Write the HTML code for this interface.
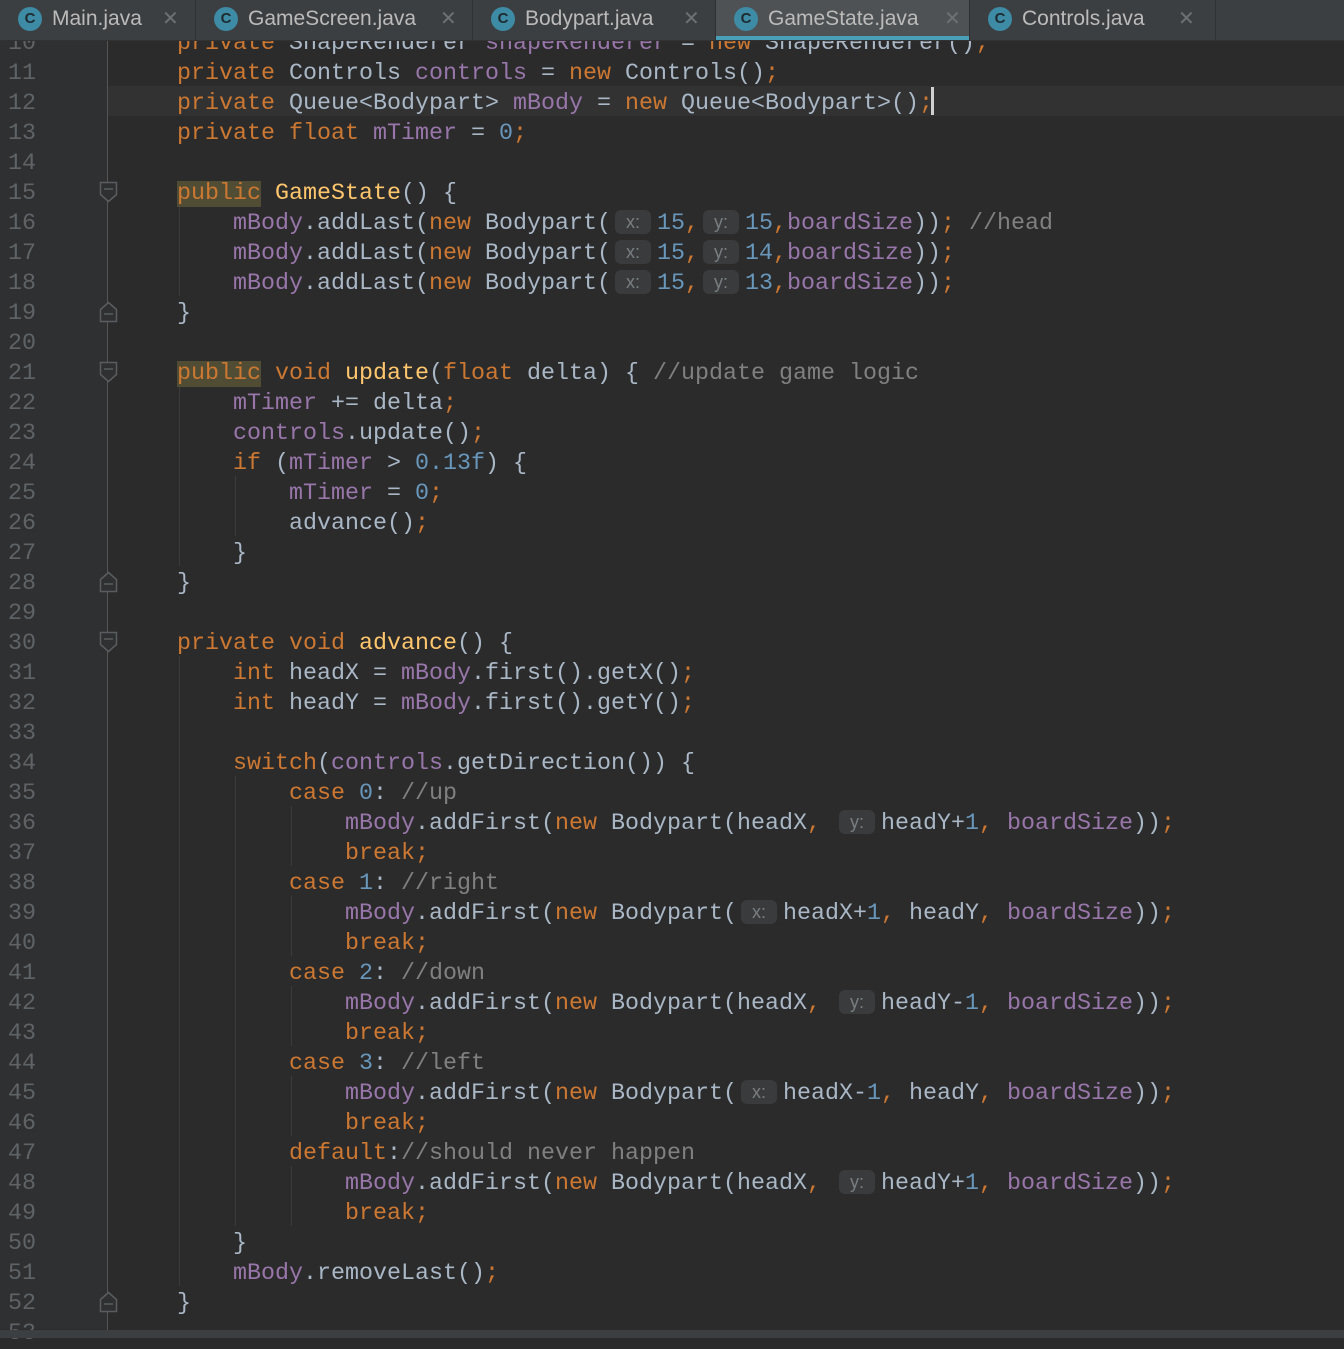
<!DOCTYPE html>
<html><head><meta charset="utf-8"><style>
body{margin:0;width:1344px;height:1338px;background:#2b2b2b;overflow:hidden;position:relative;font-family:"Liberation Mono",monospace}
#tabs{position:absolute;left:0;top:0;width:1344px;height:40px;background:#3c3f41;border-bottom:1px solid #323232;z-index:5;font-family:"Liberation Sans",sans-serif}
.tab{position:absolute;top:0;height:40px;border-right:1px solid #2f3133;color:#bbbbbb;font-size:21px;line-height:38px;white-space:nowrap}
.tab .ic{position:absolute;left:18px;top:7px;width:24px;height:24px;border-radius:50%;background:#3d8ba5;color:#1e2a30;font-size:15px;line-height:24px;text-align:center;font-weight:bold}
.tab .t{position:absolute;left:52px;top:0}
.tab .x{position:absolute;top:0;color:#6e7173;font-size:20px}
.act{background:#4e5254}
.act:after{content:"";position:absolute;left:0;right:0;bottom:0;height:4px;background:#4a9fb8}
#gutter{position:absolute;left:0;top:0;width:108px;height:1329px;background:#2f3031}
#div{position:absolute;left:107px;top:40px;width:1px;height:1290px;background:#555555}
.ln{position:absolute;left:0;width:36px;text-align:right;color:#606366;font-size:23.33px;line-height:30px;height:30px;transform:translateY(3px)}
.cl{position:absolute;left:108px;right:0;height:30px;background:#323232}
.line{position:absolute;left:177px;height:30px;line-height:30px;font-size:23.33px;color:#a9b7c6;white-space:pre;transform:translateY(3px)}
.k{color:#cc7832}.f{color:#9876aa}.n{color:#6897bb}.m{color:#ffc66d}.c{color:#808080}
.hl{background:#504d34}
.h{display:inline-block;width:36px;margin:0 6px 0 4px;height:24px;line-height:24px;vertical-align:1px;background:#393b3c;color:#7a7e80;border-radius:6px;font-size:18px;text-align:center;font-family:"Liberation Sans",sans-serif}
.g{position:absolute;width:1px;background:#3b3b3b}
#bot{position:absolute;left:0;top:1330px;width:1344px;height:8px;background:#3c3f41}
#caret{position:absolute;left:931px;top:87px;width:3px;height:28px;background:#d0d0d0}
</style></head><body>
<div id="gutter"></div>
<div class="cl" style="top:86px"></div>
<div id="div"></div>

<div class="g" style="left:179px;top:206px;height:90px"></div>
<div class="g" style="left:179px;top:386px;height:180px"></div>
<div class="g" style="left:235px;top:476px;height:60px"></div>
<div class="g" style="left:179px;top:656px;height:630px"></div>
<div class="g" style="left:235px;top:776px;height:450px"></div>
<div class="g" style="left:291px;top:806px;height:60px"></div>
<div class="g" style="left:291px;top:896px;height:60px"></div>
<div class="g" style="left:291px;top:986px;height:60px"></div>
<div class="g" style="left:291px;top:1076px;height:60px"></div>
<div class="g" style="left:291px;top:1166px;height:60px"></div>

<svg style="position:absolute;left:0;top:0" width="120" height="1330">
<g fill="#2f3031" stroke="#5a5d5f" stroke-width="1.5">
<path d="M100.5 182.5h16v12l-8 7l-8-7z"/><path d="M104 189h9"/>
<path d="M100.5 321.5h16v-12l-8-7l-8 7z"/><path d="M104 314h9"/>
<path d="M100.5 362.5h16v12l-8 7l-8-7z"/><path d="M104 369h9"/>
<path d="M100.5 591.5h16v-12l-8-7l-8 7z"/><path d="M104 584h9"/>
<path d="M100.5 632.5h16v12l-8 7l-8-7z"/><path d="M104 639h9"/>
<path d="M100.5 1311.5h16v-12l-8-7l-8 7z"/><path d="M104 1304h9"/>
</g></svg>

<div class="ln" style="top:26px">10</div>
<div class="ln" style="top:56px">11</div><div class="ln" style="top:86px">12</div><div class="ln" style="top:116px">13</div><div class="ln" style="top:146px">14</div><div class="ln" style="top:176px">15</div><div class="ln" style="top:206px">16</div><div class="ln" style="top:236px">17</div><div class="ln" style="top:266px">18</div><div class="ln" style="top:296px">19</div><div class="ln" style="top:326px">20</div><div class="ln" style="top:356px">21</div><div class="ln" style="top:386px">22</div><div class="ln" style="top:416px">23</div><div class="ln" style="top:446px">24</div><div class="ln" style="top:476px">25</div><div class="ln" style="top:506px">26</div><div class="ln" style="top:536px">27</div><div class="ln" style="top:566px">28</div><div class="ln" style="top:596px">29</div><div class="ln" style="top:626px">30</div><div class="ln" style="top:656px">31</div><div class="ln" style="top:686px">32</div><div class="ln" style="top:716px">33</div><div class="ln" style="top:746px">34</div><div class="ln" style="top:776px">35</div><div class="ln" style="top:806px">36</div><div class="ln" style="top:836px">37</div><div class="ln" style="top:866px">38</div><div class="ln" style="top:896px">39</div><div class="ln" style="top:926px">40</div><div class="ln" style="top:956px">41</div><div class="ln" style="top:986px">42</div><div class="ln" style="top:1016px">43</div><div class="ln" style="top:1046px">44</div><div class="ln" style="top:1076px">45</div><div class="ln" style="top:1106px">46</div><div class="ln" style="top:1136px">47</div><div class="ln" style="top:1166px">48</div><div class="ln" style="top:1196px">49</div><div class="ln" style="top:1226px">50</div><div class="ln" style="top:1256px">51</div><div class="ln" style="top:1286px">52</div><div class="ln" style="top:1316px">53</div>

<div class="line" style="top:26px"><span class="k">private</span> ShapeRenderer <span class="f">shapeRenderer</span> = <span class="k">new</span> ShapeRenderer()<span class="k">;</span></div>
<div class="line" style="top:56px"><span class="k">private</span> Controls <span class="f">controls</span> = <span class="k">new</span> Controls()<span class="k">;</span></div>
<div class="line" style="top:86px"><span class="k">private</span> Queue&lt;Bodypart&gt; <span class="f">mBody</span> = <span class="k">new</span> Queue&lt;Bodypart&gt;()<span class="k">;</span></div>
<div class="line" style="top:116px"><span class="k">private float</span> <span class="f">mTimer</span> = <span class="n">0</span><span class="k">;</span></div>
<div class="line" style="top:176px"><span class="k hl">public</span> <span class="m">GameState</span>() {</div>
<div class="line" style="top:206px">    <span class="f">mBody</span>.addLast(<span class="k">new</span> Bodypart(<span class="h">x:</span><span class="n">15</span><span class="k">,</span><span class="h">y:</span><span class="n">15</span><span class="k">,</span><span class="f">boardSize</span>))<span class="k">;</span> <span class="c">//head</span></div>
<div class="line" style="top:236px">    <span class="f">mBody</span>.addLast(<span class="k">new</span> Bodypart(<span class="h">x:</span><span class="n">15</span><span class="k">,</span><span class="h">y:</span><span class="n">14</span><span class="k">,</span><span class="f">boardSize</span>))<span class="k">;</span></div>
<div class="line" style="top:266px">    <span class="f">mBody</span>.addLast(<span class="k">new</span> Bodypart(<span class="h">x:</span><span class="n">15</span><span class="k">,</span><span class="h">y:</span><span class="n">13</span><span class="k">,</span><span class="f">boardSize</span>))<span class="k">;</span></div>
<div class="line" style="top:296px">}</div>
<div class="line" style="top:356px"><span class="k hl">public</span> <span class="k">void</span> <span class="m">update</span>(<span class="k">float</span> delta) { <span class="c">//update game logic</span></div>
<div class="line" style="top:386px">    <span class="f">mTimer</span> += delta<span class="k">;</span></div>
<div class="line" style="top:416px">    <span class="f">controls</span>.update()<span class="k">;</span></div>
<div class="line" style="top:446px">    <span class="k">if</span> (<span class="f">mTimer</span> &gt; <span class="n">0.13f</span>) {</div>
<div class="line" style="top:476px">        <span class="f">mTimer</span> = <span class="n">0</span><span class="k">;</span></div>
<div class="line" style="top:506px">        advance()<span class="k">;</span></div>
<div class="line" style="top:536px">    }</div>
<div class="line" style="top:566px">}</div>
<div class="line" style="top:626px"><span class="k">private void</span> <span class="m">advance</span>() {</div>
<div class="line" style="top:656px">    <span class="k">int</span> headX = <span class="f">mBody</span>.first().getX()<span class="k">;</span></div>
<div class="line" style="top:686px">    <span class="k">int</span> headY = <span class="f">mBody</span>.first().getY()<span class="k">;</span></div>
<div class="line" style="top:746px">    <span class="k">switch</span>(<span class="f">controls</span>.getDirection()) {</div>
<div class="line" style="top:776px">        <span class="k">case</span> <span class="n">0</span>: <span class="c">//up</span></div>
<div class="line" style="top:806px">            <span class="f">mBody</span>.addFirst(<span class="k">new</span> Bodypart(headX<span class="k">,</span> <span class="h">y:</span>headY+<span class="n">1</span><span class="k">,</span> <span class="f">boardSize</span>))<span class="k">;</span></div>
<div class="line" style="top:836px">            <span class="k">break;</span></div>
<div class="line" style="top:866px">        <span class="k">case</span> <span class="n">1</span>: <span class="c">//right</span></div>
<div class="line" style="top:896px">            <span class="f">mBody</span>.addFirst(<span class="k">new</span> Bodypart(<span class="h">x:</span>headX+<span class="n">1</span><span class="k">,</span> headY<span class="k">,</span> <span class="f">boardSize</span>))<span class="k">;</span></div>
<div class="line" style="top:926px">            <span class="k">break;</span></div>
<div class="line" style="top:956px">        <span class="k">case</span> <span class="n">2</span>: <span class="c">//down</span></div>
<div class="line" style="top:986px">            <span class="f">mBody</span>.addFirst(<span class="k">new</span> Bodypart(headX<span class="k">,</span> <span class="h">y:</span>headY-<span class="n">1</span><span class="k">,</span> <span class="f">boardSize</span>))<span class="k">;</span></div>
<div class="line" style="top:1016px">            <span class="k">break;</span></div>
<div class="line" style="top:1046px">        <span class="k">case</span> <span class="n">3</span>: <span class="c">//left</span></div>
<div class="line" style="top:1076px">            <span class="f">mBody</span>.addFirst(<span class="k">new</span> Bodypart(<span class="h">x:</span>headX-<span class="n">1</span><span class="k">,</span> headY<span class="k">,</span> <span class="f">boardSize</span>))<span class="k">;</span></div>
<div class="line" style="top:1106px">            <span class="k">break;</span></div>
<div class="line" style="top:1136px">        <span class="k">default</span>:<span class="c">//should never happen</span></div>
<div class="line" style="top:1166px">            <span class="f">mBody</span>.addFirst(<span class="k">new</span> Bodypart(headX<span class="k">,</span> <span class="h">y:</span>headY+<span class="n">1</span><span class="k">,</span> <span class="f">boardSize</span>))<span class="k">;</span></div>
<div class="line" style="top:1196px">            <span class="k">break;</span></div>
<div class="line" style="top:1226px">    }</div>
<div class="line" style="top:1256px">    <span class="f">mBody</span>.removeLast()<span class="k">;</span></div>
<div class="line" style="top:1286px">}</div>
<div id="caret"></div>
<div id="bot"></div>

<div id="tabs">
 <div class="tab" style="left:0;width:195px"><span class="ic">C</span><span class="t">Main.java</span><span class="x" style="left:162px">✕</span></div>
 <div class="tab" style="left:196px;width:276px"><span class="ic">C</span><span class="t">GameScreen.java</span><span class="x" style="left:244px">✕</span></div>
 <div class="tab" style="left:473px;width:242px"><span class="ic">C</span><span class="t">Bodypart.java</span><span class="x" style="left:210px">✕</span></div>
 <div class="tab act" style="left:716px;width:253px"><span class="ic">C</span><span class="t">GameState.java</span><span class="x" style="left:228px">✕</span></div>
 <div class="tab" style="left:970px;width:245px"><span class="ic">C</span><span class="t">Controls.java</span><span class="x" style="left:208px">✕</span></div>
</div>
</body></html>
